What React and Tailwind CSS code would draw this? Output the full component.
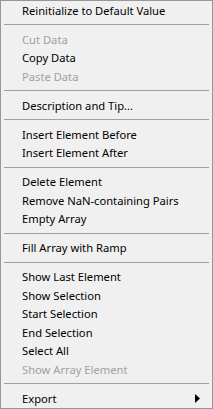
import React from "react";

const items = [
  { t: "Reinitialize to Default Value" },
  { sep: true },
  { t: "Cut Data", d: true },
  { t: "Copy Data" },
  { t: "Paste Data", d: true },
  { sep: true },
  { t: "Description and Tip..." },
  { sep: true },
  { t: "Insert Element Before" },
  { t: "Insert Element After" },
  { sep: true },
  { t: "Delete Element" },
  { t: "Remove NaN-containing Pairs" },
  { t: "Empty Array" },
  { sep: true },
  { t: "Fill Array with Ramp" },
  { sep: true },
  { t: "Show Last Element" },
  { t: "Show Selection" },
  { t: "Start Selection" },
  { t: "End Selection" },
  { t: "Select All" },
  { t: "Show Array Element", d: true },
  { sep: true },
  { t: "Export", sub: true },
];

export default function App() {
  return (
    <div
      className="w-[213px] h-[409px] bg-[#f0f0f0] border border-[#979797] flex flex-col text-[11.2px] overflow-hidden"
      style={{ fontFamily: '"Noto Sans", "Open Sans", sans-serif' }}
    >
      {items.map((it, i) =>
        it.sep ? (
          <div key={i} className="h-[10.5px] flex items-center px-[3px]">
            <div className="w-full h-px bg-[#a0a0a0]" />
          </div>
        ) : (
          <div
            key={i}
            className={`h-[18.5px] flex items-center pl-[21px] pr-[10px] leading-none ${
              it.d ? "text-[#a0a0a0]" : "text-black"
            }`}
          >
            <span className="flex-1 whitespace-nowrap">{it.t}</span>
            {it.sub && (
              <svg width="5" height="9" viewBox="0 0 5 9" className="mr-[2px]">
                <path d="M0 0 L5 4.5 L0 9 Z" fill="#000" />
              </svg>
            )}
          </div>
        )
      )}
    </div>
  );
}
